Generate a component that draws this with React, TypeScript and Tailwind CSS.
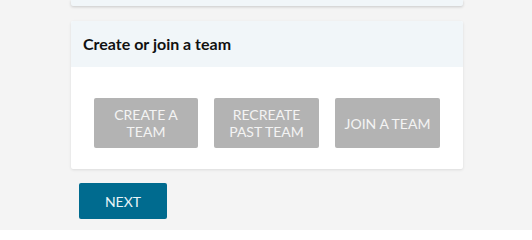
export default function App() {
  return (
    <div className="min-h-[230px] w-full bg-[#f4f4f4] font-['Lato','Noto_Sans',sans-serif]">
      <div className="ml-[71px] w-[392px] flex flex-col">
        <div className="h-[6px] bg-[#f1f6f9] rounded-b-[2px] shadow-[0_1px_3px_rgba(0,0,0,0.18)]" />

        <div className="mt-[15px] bg-white rounded-[2px] shadow-[0_1px_3px_rgba(0,0,0,0.1)] overflow-hidden">
          <div className="h-[46px] px-3 flex items-center bg-[#f1f6f9]">
            <h2 className="text-[16px] font-bold text-[#111]">Create or join a team</h2>
          </div>
          <div className="pt-[31px] pb-[21px] flex justify-center gap-4">
            <button className="w-[104px] h-[50px] rounded-[2px] bg-[#b3b3b3] text-[#f4f4f4] text-[14px] leading-[17px] uppercase">
              Create a<br />team
            </button>
            <button className="w-[105px] h-[50px] rounded-[2px] bg-[#b3b3b3] text-[#f4f4f4] text-[14px] leading-[17px] uppercase">
              Recreate<br />past team
            </button>
            <button className="w-[105px] h-[50px] rounded-[2px] bg-[#b3b3b3] text-[#f4f4f4] text-[14px] leading-[17px] uppercase">
              Join a team
            </button>
          </div>
        </div>

        <div className="mt-[14px] pl-2">
          <button className="w-[88px] h-[36px] rounded-[2px] bg-[#006b8f] text-[#e8f4f8] text-[14px] uppercase">
            Next
          </button>
        </div>
      </div>
    </div>
  );
}
